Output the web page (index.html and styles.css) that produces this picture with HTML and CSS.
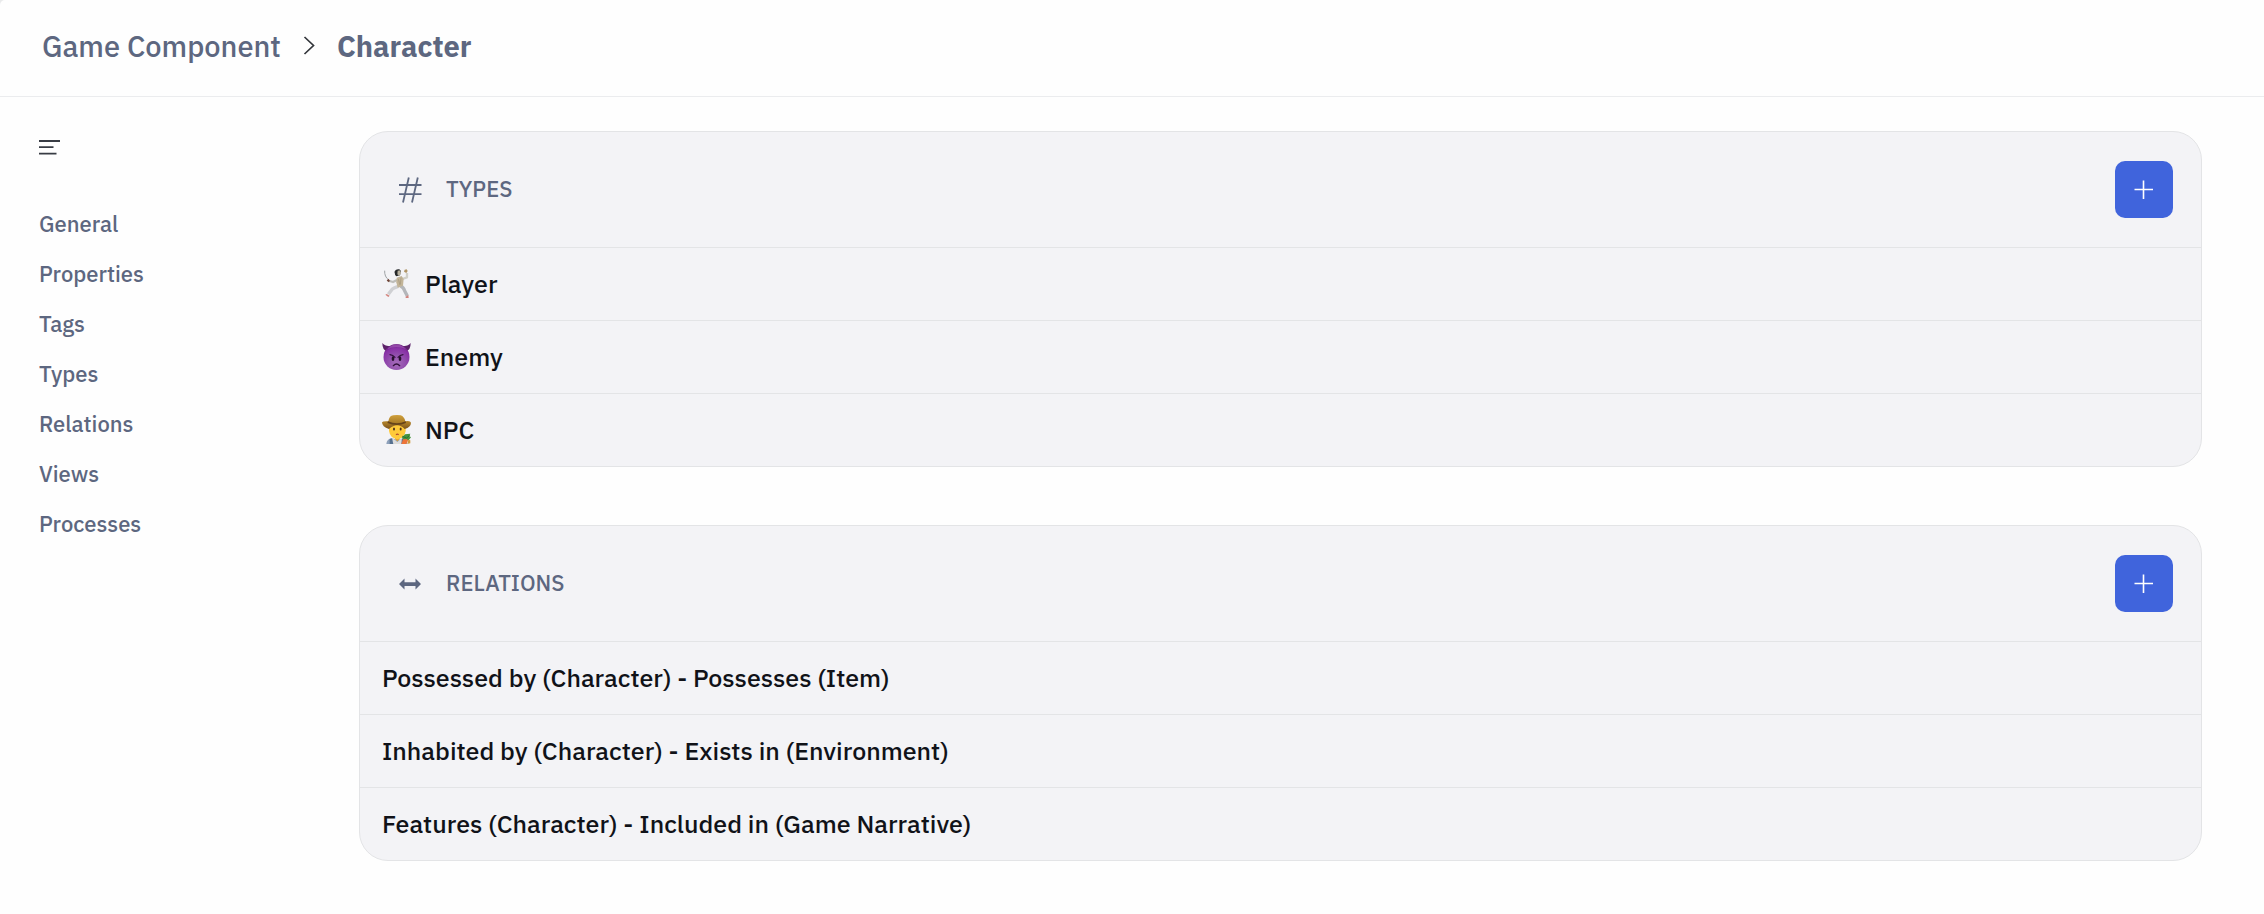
FILE: index.html
```html
<!DOCTYPE html>
<html lang="en">
<head>
<meta charset="utf-8">
<meta name="viewport" content="width=device-width, initial-scale=1">
<title>Character</title>
<link rel="stylesheet" href="styles.css">
</head>
<body>
<header class="topbar">
  <nav class="crumbs" aria-label="Breadcrumb">
    <a class="crumb" href="#">Game Component</a>
    <svg class="crumb-sep" viewBox="0 0 12 20" aria-hidden="true"><path d="M1.500 1 10.500 9.500 1.500 18" fill="none" stroke="#33363b" stroke-width="1.700"/></svg>
    <a class="crumb crumb-current" href="#" aria-current="page">Character</a>
  </nav>
</header>
<div class="layout">
  <aside class="side">
    <button class="menu" type="button" aria-label="Toggle menu">
      <svg viewBox="0 0 22 16" aria-hidden="true"><path d="M0 2h21M0 8.200h14.500M0 14.600h17.500" fill="none" stroke="#383c44" stroke-width="1.800"/></svg>
    </button>
    <nav class="links" aria-label="Sections">
      <a href="#general">General</a>
      <a href="#properties">Properties</a>
      <a href="#tags">Tags</a>
      <a href="#types">Types</a>
      <a href="#relations">Relations</a>
      <a href="#views">Views</a>
      <a href="#processes">Processes</a>
    </nav>
  </aside>
  <main class="content">
    <section class="card" id="types">
      <div class="card-head">
        <svg class="head-icon" viewBox="0 0 24 26" aria-hidden="true"><path d="M10.800 .5 5 25.500M19.800 .5 14 25.500M1 8h22.500M1 17.200h22.500" fill="none" stroke="#5d6780" stroke-width="1.800"/></svg>
        <h2>TYPES</h2>
        <button class="add" type="button" aria-label="Add type"><svg viewBox="0 0 20 20" aria-hidden="true"><path d="M9.500 .5v18.500M.5 9.500h18.500" stroke="#fff" stroke-width="1.600"/></svg></button>
      </div>
      <ul class="rows">
        <li>
          <svg class="emoji" viewBox="21 30 87 87" aria-hidden="true">
            <path d="M29 35Q28 53 41 63" fill="none" stroke="#9ea2a5" stroke-width="3"/>
            <path d="M35 65l5-6 6 7-4 4z" fill="#6e4336"/>
            <path d="M44 66l10 3 12-6" fill="none" stroke="#bdbdb9" stroke-width="7" stroke-linejoin="round"/>
            <path d="M82 60l14-5V42" fill="none" stroke="#d0cfc8" stroke-width="7" stroke-linejoin="round"/>
            <path d="M87 38l2-6 6-1 3 5-4 6z" fill="#b09466"/>
            <path d="M70 82Q57 86 52 90L40 106" fill="none" stroke="#cfd0d3" stroke-width="10" stroke-linejoin="round"/>
            <path d="M76 80Q87 86 88 94L97 111" fill="none" stroke="#b4b6ba" stroke-width="10" stroke-linejoin="round"/>
            <path d="M65 56l15-5 6 9-2 20-16 6-4-16z" fill="#c2b498"/>
            <path d="M70 60l5 18M78 56l-2 20" stroke="#a3957b" stroke-width="2"/>
            <path d="M59 37q4-8 14-6l5 5-3 13-11 3q-6-6-5-15z" fill="#26282a"/>
            <path d="M68 35l8-1 2 9-5 8-6-5z" fill="#b8b19e"/>
            <path d="M31 107l4-2 9 5-4 4zM91 114l9-6 1 9h-8z" fill="#d2827c"/>
          </svg>
          <span>Player</span>
        </li>
        <li>
          <svg class="emoji" viewBox="21 30 87 87" aria-hidden="true">
            <defs><radialGradient id="face" cx=".5" cy=".75" r=".7"><stop offset="0" stop-color="#a66dbb"/><stop offset=".45" stop-color="#9350ae"/><stop offset=".85" stop-color="#8830a6"/><stop offset="1" stop-color="#6a237f"/></radialGradient></defs>
            <path d="M22 33Q22 54 36 58L48 43Q30 43 22 33zM107 33Q107 54 93 58L81 43Q99 43 107 33z" fill="#5c2169"/>
            <circle cx="64.500" cy="75" r="39" fill="url(#face)"/>
            <path d="M36 51Q64 23 93 51Q64 39 36 51z" fill="#b567ca" opacity=".5"/>
            <path d="M45 68q9 1 15 8M84 68q-9 1-15 8" fill="none" stroke="#30103b" stroke-width="3.500" stroke-linecap="round"/>
            <ellipse cx="54" cy="80" rx="4" ry="7" fill="#28102f"/><ellipse cx="75" cy="80" rx="4" ry="7" fill="#28102f"/>
            <path d="M55 101q9.500-10 19 0" fill="none" stroke="#30103b" stroke-width="4" stroke-linecap="round"/>
          </svg>
          <span>Enemy</span>
        </li>
        <li>
          <svg class="emoji" viewBox="21 33 87 87" aria-hidden="true">
            <defs><linearGradient id="hat" x1="0" y1="0" x2="0" y2="1"><stop offset="0" stop-color="#d0a03c"/><stop offset=".6" stop-color="#a87a26"/><stop offset="1" stop-color="#7a511e"/></linearGradient></defs>
            <path d="M34 120q1-15 17-17l17 5 17-5q10 3 12 17z" fill="#8da0ba"/>
            <path d="M53 102l14 12 13-12 1 18H53z" fill="#dddcdb"/>
            <path d="M44 105l6-2 5 17H44zM81 104l7 2-1 14h-8z" fill="#56708f"/>
            <path d="M60 93h14v12l-7 7-7-7z" fill="#e9a42a"/>
            <path d="M42 62q24-13 50 0v19q-3 21-25 25-22-4-25-25z" fill="#ffca3a"/>
            <path d="M21 55q2-4 19-3Q43 34 55 34q11-2 22 0 11 4 14 18 15-3 17 4 0 13-19 19Q67 53 42 75 21 69 21 55z" fill="url(#hat)"/>
            <path d="M39 52Q66 64 92 52l1 5Q66 69 37 57z" fill="#66431b"/>
            <ellipse cx="57" cy="75" rx="3" ry="4.500" fill="#50351c"/><ellipse cx="77" cy="75" rx="3" ry="4.500" fill="#50351c"/>
            <path d="M63 92q4-3 8 0" fill="none" stroke="#b64d30" stroke-width="4"/>
            <path d="M80 101l10-10 16-2-3 7 5 4-7 9-11 1z" fill="#46943d"/>
            <path d="M82 97l13 5 9-8" fill="none" stroke="#287038" stroke-width="3"/>
            <path d="M84 106l12-1 3 5-5 10H79z" fill="#ed7438"/>
            <path d="M100 107l6 2v9l-9 2z" fill="#cf9a3c"/>
          </svg>
          <span>NPC</span>
        </li>
      </ul>
    </section>
    <section class="card" id="relations">
      <div class="card-head">
        <svg class="head-icon" viewBox="0 0 24 26" aria-hidden="true"><path d="M1 13 6.500 7.500V11.200H17.500V7.500L23 13 17.500 18.500V15H6.500V18.500z" fill="#5d6780"/></svg>
        <h2>RELATIONS</h2>
        <button class="add" type="button" aria-label="Add relation"><svg viewBox="0 0 20 20" aria-hidden="true"><path d="M9.500 .5v18.500M.5 9.500h18.500" stroke="#fff" stroke-width="1.600"/></svg></button>
      </div>
      <ul class="rows">
        <li><span>Possessed by (Character) - Possesses (Item)</span></li>
        <li><span>Inhabited by (Character) - Exists in (Environment)</span></li>
        <li><span>Features (Character) - Included in (Game Narrative)</span></li>
      </ul>
    </section>
  </main>
</div>
</body>
</html>
```
FILE: styles.css
```css
* {
  box-sizing: border-box;
}

html {
  background: #e9eaeb;
}

body {
  margin: 0;
  min-height: 100vh;
  background: #fefefe;
  border-top-left-radius: 5px;
  color: #101218;
  font-family: "IBM Plex Sans", Roboto, "Noto Sans", sans-serif;
  font-weight: 500;
}

a {
  color: #5d6780;
  text-decoration: none;
}

button {
  padding: 0;
  border: 0;
  background: none;
  cursor: pointer;
}

svg {
  display: block;
  flex: none;
}

.topbar {
  display: flex;
  align-items: center;
  height: 97px;
  padding: 0 42px 4px;
  border-bottom: 1px solid #ebecee;
}

.crumbs {
  display: flex;
  align-items: center;
  gap: 22px;
  font-size: 29px;
  line-height: 36px;
}

.crumb-current {
  font-weight: 700;
}

.crumb-sep {
  width: 12px;
  height: 20px;
}

.layout {
  display: flex;
}

.side {
  flex: none;
  width: 359px;
  padding: 42px 39px;
}

.menu {
  display: block;
}

.menu svg {
  width: 22px;
  height: 16px;
}

.links {
  display: flex;
  flex-direction: column;
  align-items: flex-start;
  gap: 22px;
  margin-top: 55px;
  font-size: 22px;
  line-height: 28px;
}

.content {
  flex: 1;
  display: flex;
  flex-direction: column;
  gap: 58px;
  min-width: 0;
  padding: 34px 62px 48px 0;
}

.card {
  border: 1px solid #e3e4e6;
  border-radius: 29px;
  background: #f3f3f6;
}

.card-head {
  display: flex;
  align-items: center;
  gap: 24px;
  padding: 29px 28px 29px 38px;
}

.card-head h2 {
  flex: 1;
  margin: 0;
  padding-bottom: 1px;
  color: #5d6780;
  font-size: 22px;
  font-weight: 500;
  line-height: 28px;
}

.head-icon {
  width: 24px;
  height: 26px;
}

.add {
  display: flex;
  align-items: center;
  justify-content: center;
  width: 58px;
  height: 57px;
  border-radius: 10px;
  background: #4064dc;
}

.add svg {
  width: 20px;
  height: 20px;
}

.rows {
  margin: 0;
  padding: 0;
  list-style: none;
}

.rows li {
  display: flex;
  align-items: center;
  gap: 14px;
  height: 73px;
  padding: 0 22px 1px;
  border-top: 1px solid #e3e4e6;
  font-size: 25px;
  line-height: 32px;
}

.emoji {
  width: 29px;
  height: 29px;
}
```
